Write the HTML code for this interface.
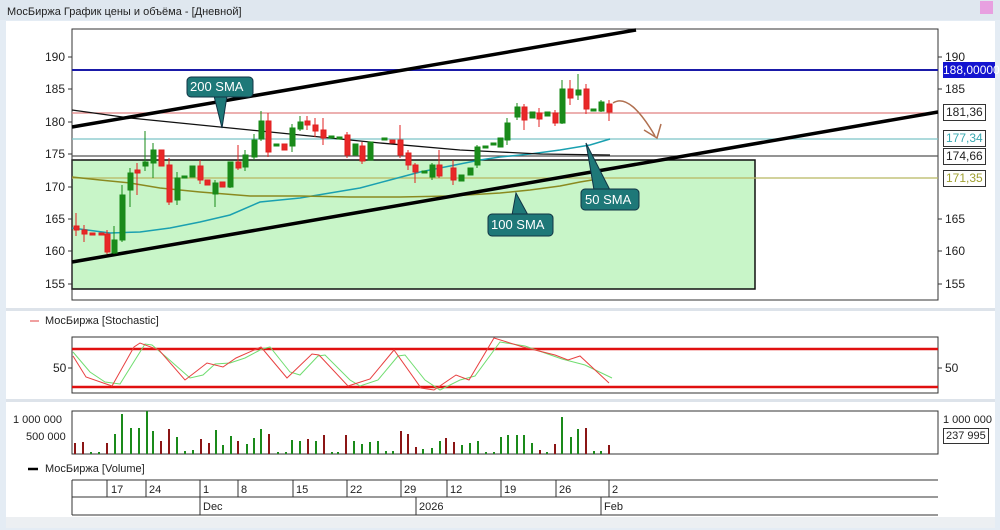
<!DOCTYPE html><html><head><meta charset="utf-8"><style>
body{margin:0;width:1000px;height:530px;overflow:hidden;background:#e4ecf4;font-family:"Liberation Sans",sans-serif;}
.t{position:absolute;font-size:12px;color:#222;white-space:nowrap;line-height:14px}
</style></head><body>
<div style="position:absolute;left:0;top:0;width:1000px;height:20px;background:#dfe7ef"></div>
<div class="t" style="left:7px;top:5px;font-size:11px">МосБиржа График цены и объёма - [Дневной]</div>
<div style="position:absolute;left:980px;top:1px;width:13px;height:13px;background:#e8a0e0"></div>
<div style="position:absolute;left:6px;top:21px;width:989px;height:496px;background:#fff"></div>
<div style="position:absolute;left:6px;top:517px;width:989px;height:11px;background:#eceff2"></div>
<svg style="position:absolute;left:0;top:0" width="1000" height="530">
<!-- main box -->
<rect x="72" y="160" width="683" height="129" fill="#c8f5c8" stroke="#111" stroke-width="1.5"/>
<rect x="72" y="29" width="866" height="271" fill="none" stroke="#333"/>
<g stroke-width="1.2">
<line x1="72" y1="70" x2="938" y2="70" stroke="#1a1aa8" stroke-width="2"/>
<line x1="72" y1="113" x2="938" y2="113" stroke="#e08080"/>
<line x1="72" y1="139" x2="938" y2="139" stroke="#7cc4c8"/>
<line x1="72" y1="156" x2="938" y2="156" stroke="#555"/>
<line x1="72" y1="178" x2="938" y2="178" stroke="#b8b860"/>
</g>
<polyline fill="none" stroke="#1aa0b0" stroke-width="1.5" points="72,228 110,233 140,232 170,228 200,222 230,215 260,202 280,200 300,198 330,193 360,188 390,180 420,172 450,166 480,160 500,157 530,154 560,150 590,145 610,139"/>
<polyline fill="none" stroke="#8a8a20" stroke-width="1.5" points="72,177 100,180 130,183 160,188 200,192 250,196 300,196 350,197 400,197 450,196 500,193 530,190 560,186 580,182 598,179"/>
<polyline fill="none" stroke="#111" stroke-width="1.3" points="72,110 130,118 220,127 300,135 380,143 460,150 500,152 540,154 610,155"/>
<line x1="72" y1="127" x2="636" y2="30" stroke="#000" stroke-width="3.5"/>
<line x1="72" y1="262" x2="938" y2="112" stroke="#000" stroke-width="3.5"/>
<g stroke-width="1">
<g stroke="#e02020" fill="#e82828">
<line x1="76" y1="213" x2="76" y2="236"/><rect x="74" y="226" width="5" height="4"/>
<line x1="84" y1="225" x2="84" y2="242"/><rect x="82" y="230" width="5" height="4"/>
<line x1="107" y1="230" x2="107" y2="254"/><rect x="105" y="234" width="5" height="18"/>
<line x1="137" y1="163" x2="137" y2="195"/><rect x="135" y="170" width="5" height="3"/>
<rect x="159" y="150" width="5" height="16"/>
<line x1="169" y1="158" x2="169" y2="205"/><rect x="167" y="165" width="5" height="37"/>
<line x1="200" y1="160" x2="200" y2="184"/><rect x="198" y="166" width="5" height="14"/>
<rect x="205" y="180" width="5" height="5"/><rect x="220" y="182" width="5" height="5"/>
<line x1="238" y1="145" x2="238" y2="170"/><rect x="236" y="162" width="5" height="6"/>
<line x1="268" y1="113" x2="268" y2="157"/><rect x="266" y="121" width="5" height="31"/>
<rect x="282" y="144" width="5" height="6"/>
<line x1="307" y1="116" x2="307" y2="130"/><rect x="305" y="121" width="5" height="4"/>
<line x1="315" y1="118" x2="315" y2="137"/><rect x="313" y="125" width="5" height="6"/>
<line x1="323" y1="118" x2="323" y2="145"/><rect x="321" y="130" width="5" height="8"/>
<line x1="347" y1="132" x2="347" y2="158"/><rect x="345" y="135" width="5" height="20"/>
<line x1="362" y1="142" x2="362" y2="164"/><rect x="360" y="146" width="5" height="15"/>
<rect x="390" y="140" width="5" height="3"/>
<line x1="400" y1="125" x2="400" y2="158"/><rect x="398" y="140" width="5" height="15"/>
<line x1="408" y1="150" x2="408" y2="170"/><rect x="406" y="153" width="5" height="12"/>
<line x1="415" y1="163" x2="415" y2="183"/><rect x="413" y="165" width="5" height="7"/>
<line x1="439" y1="150" x2="439" y2="178"/><rect x="437" y="165" width="5" height="11"/>
<line x1="453" y1="160" x2="453" y2="185"/><rect x="451" y="168" width="5" height="12"/>
<line x1="524" y1="104" x2="524" y2="130"/><rect x="522" y="107" width="5" height="13"/>
<line x1="539" y1="108" x2="539" y2="127"/><rect x="537" y="113" width="5" height="6"/>
<line x1="555" y1="110" x2="555" y2="126"/><rect x="553" y="113" width="5" height="10"/>
<line x1="570" y1="80" x2="570" y2="105"/><rect x="568" y="89" width="5" height="9"/>
<line x1="586" y1="84" x2="586" y2="114"/><rect x="584" y="89" width="5" height="20"/>
<line x1="609" y1="100" x2="609" y2="121"/><rect x="607" y="104" width="5" height="8"/>
<rect x="90" y="233" width="5" height="2"/><rect x="99" y="233" width="5" height="2"/>
</g>
<g stroke="#168a16" fill="#1a8a1a">
<line x1="114" y1="226" x2="114" y2="254"/><rect x="112" y="240" width="5" height="13"/>
<line x1="122" y1="185" x2="122" y2="242"/><rect x="120" y="195" width="5" height="45"/>
<line x1="130" y1="168" x2="130" y2="207"/><rect x="128" y="173" width="5" height="17"/>
<line x1="145" y1="131" x2="145" y2="171"/><rect x="143" y="162" width="5" height="4"/>
<line x1="153" y1="143" x2="153" y2="178"/><rect x="151" y="150" width="5" height="13"/>
<line x1="177" y1="172" x2="177" y2="205"/><rect x="175" y="178" width="5" height="22"/>
<rect x="182" y="176" width="5" height="2"/>
<rect x="190" y="166" width="5" height="11"/>
<line x1="215" y1="180" x2="215" y2="207"/><rect x="213" y="183" width="5" height="11"/>
<line x1="230" y1="162" x2="230" y2="188"/><rect x="228" y="162" width="5" height="25"/>
<line x1="245" y1="150" x2="245" y2="171"/><rect x="243" y="155" width="5" height="12"/>
<line x1="254" y1="134" x2="254" y2="160"/><rect x="252" y="140" width="5" height="17"/>
<line x1="261" y1="111" x2="261" y2="141"/><rect x="259" y="121" width="5" height="18"/>
<rect x="274" y="144" width="5" height="2"/>
<line x1="292" y1="124" x2="292" y2="152"/><rect x="290" y="128" width="5" height="18"/>
<line x1="300" y1="116" x2="300" y2="131"/><rect x="298" y="122" width="5" height="7"/>
<rect x="329" y="136" width="5" height="2"/><rect x="337" y="137" width="5" height="2"/>
<rect x="353" y="144" width="5" height="11"/>
<rect x="368" y="142" width="5" height="18"/>
<rect x="382" y="138" width="5" height="2"/><rect x="422" y="171" width="5" height="2"/>
<line x1="432" y1="163" x2="432" y2="180"/><rect x="430" y="165" width="5" height="12"/>
<rect x="459" y="175" width="5" height="6"/>
<rect x="468" y="168" width="5" height="7"/>
<line x1="477" y1="145" x2="477" y2="168"/><rect x="475" y="147" width="5" height="18"/>
<rect x="483" y="146" width="5" height="2"/><rect x="491" y="143" width="5" height="2"/>
<rect x="498" y="138" width="5" height="9"/>
<line x1="507" y1="118" x2="507" y2="145"/><rect x="505" y="123" width="5" height="17"/>
<line x1="517" y1="103" x2="517" y2="120"/><rect x="515" y="107" width="5" height="10"/>
<rect x="530" y="112" width="5" height="6"/><rect x="545" y="112" width="5" height="4"/>
<line x1="562" y1="80" x2="562" y2="124"/><rect x="560" y="89" width="5" height="34"/>
<line x1="578" y1="74" x2="578" y2="100"/><rect x="576" y="90" width="5" height="5"/>
<rect x="591" y="109" width="5" height="2"/>
<line x1="601" y1="100" x2="601" y2="112"/><rect x="599" y="102" width="5" height="9"/>
</g></g>
<path d="M613,103 C625,95 640,110 655,136" fill="none" stroke="#b07050" stroke-width="1.5"/>
<path d="M644,130 L657,138 L661,124" fill="none" stroke="#b07050" stroke-width="1.5"/>
<!-- callouts -->
<path d="M214,96 L222,128 L227,96Z" fill="#1e7878" stroke="#134"/>
<rect x="187" y="77" width="66" height="20" rx="4" fill="#1e7878" stroke="#134"/>
<path d="M586,143 L594,190 L610,190Z" fill="#1e7878" stroke="#134"/>
<rect x="581" y="189" width="58" height="21" rx="4" fill="#1e7878" stroke="#134"/>
<path d="M516,193 L512,215 L528,215Z" fill="#1e7878" stroke="#134"/>
<rect x="488" y="214" width="65" height="22" rx="4" fill="#1e7878" stroke="#134"/>
<!-- axis ticks -->
<g stroke="#333">
<line x1="68" y1="57" x2="72" y2="57"/><line x1="68" y1="89" x2="72" y2="89"/><line x1="68" y1="122" x2="72" y2="122"/><line x1="68" y1="154" x2="72" y2="154"/><line x1="68" y1="187" x2="72" y2="187"/><line x1="68" y1="219" x2="72" y2="219"/><line x1="68" y1="251" x2="72" y2="251"/><line x1="68" y1="284" x2="72" y2="284"/>
<line x1="938" y1="57" x2="942" y2="57"/><line x1="938" y1="89" x2="942" y2="89"/><line x1="938" y1="219" x2="942" y2="219"/><line x1="938" y1="251" x2="942" y2="251"/><line x1="938" y1="284" x2="942" y2="284"/>
</g>
<!-- separators -->
<rect x="6" y="308" width="989" height="3" fill="#dde3ea"/>
<rect x="6" y="399" width="989" height="3" fill="#dde3ea"/>
<!-- stochastic -->
<rect x="72" y="337" width="866" height="56" fill="none" stroke="#333"/>
<line x1="72" y1="349" x2="938" y2="349" stroke="#e01010" stroke-width="2.5"/>
<line x1="72" y1="387" x2="938" y2="387" stroke="#e01010" stroke-width="2.5"/>
<line x1="68" y1="368" x2="72" y2="368" stroke="#333"/><line x1="938" y1="368" x2="942" y2="368" stroke="#333"/>
<polyline fill="none" stroke="#70dd70" stroke-width="1" points="73,352 90,372 105,382 120,384 135,360 145,344 152,345 165,356 190,378 203,375 215,364 230,363 245,358 262,349 270,347 290,372 300,375 318,356 325,355 350,380 360,386 378,380 398,356 405,355 425,380 440,390 460,380 475,376 500,342 525,346 562,359 585,365 612,378"/>
<polyline fill="none" stroke="#e84040" stroke-width="1" points="73,356 86,377 112,386 134,347 140,343 159,350 185,380 198,370 207,363 223,367 236,358 261,347 287,378 312,354 319,355 348,386 370,379 394,350 421,388 434,390 456,375 469,380 494,338 523,347 555,355 568,360 580,356 609,383"/>
<!-- volume -->
<rect x="72" y="411" width="866" height="43" fill="none" stroke="#333"/>
<g stroke-width="2">
<g stroke="#8b1515"><line x1="75" y1="454" x2="75" y2="443"/><line x1="83" y1="454" x2="83" y2="442"/><line x1="107" y1="454" x2="107" y2="443"/><line x1="161" y1="454" x2="161" y2="441"/><line x1="169" y1="454" x2="169" y2="429"/><line x1="201" y1="454" x2="201" y2="439"/><line x1="209" y1="454" x2="209" y2="443"/><line x1="238" y1="454" x2="238" y2="441"/><line x1="269" y1="454" x2="269" y2="434"/><line x1="308" y1="454" x2="308" y2="439"/><line x1="324" y1="454" x2="324" y2="435"/><line x1="346" y1="454" x2="346" y2="435"/><line x1="401" y1="454" x2="401" y2="431"/><line x1="408" y1="454" x2="408" y2="434"/><line x1="416" y1="454" x2="416" y2="447"/><line x1="446" y1="454" x2="446" y2="438"/><line x1="454" y1="454" x2="454" y2="442"/><line x1="540" y1="454" x2="540" y2="450"/><line x1="555" y1="454" x2="555" y2="444"/><line x1="586" y1="454" x2="586" y2="428"/><line x1="609" y1="454" x2="609" y2="445"/></g>
<g stroke="#1a8a1a"><line x1="91" y1="454" x2="91" y2="452"/><line x1="99" y1="454" x2="99" y2="452"/><line x1="115" y1="454" x2="115" y2="434"/><line x1="122" y1="454" x2="122" y2="414"/><line x1="131" y1="454" x2="131" y2="428"/><line x1="139" y1="454" x2="139" y2="428"/><line x1="147" y1="454" x2="147" y2="411"/><line x1="153" y1="454" x2="153" y2="431"/><line x1="177" y1="454" x2="177" y2="437"/><line x1="185" y1="454" x2="185" y2="451"/><line x1="193" y1="454" x2="193" y2="450"/><line x1="216" y1="454" x2="216" y2="430"/><line x1="223" y1="454" x2="223" y2="445"/><line x1="231" y1="454" x2="231" y2="436"/><line x1="247" y1="454" x2="247" y2="444"/><line x1="254" y1="454" x2="254" y2="438"/><line x1="261" y1="454" x2="261" y2="429"/><line x1="278" y1="454" x2="278" y2="452"/><line x1="286" y1="454" x2="286" y2="452"/><line x1="292" y1="454" x2="292" y2="440"/><line x1="300" y1="454" x2="300" y2="441"/><line x1="316" y1="454" x2="316" y2="441"/><line x1="332" y1="454" x2="332" y2="452"/><line x1="338" y1="454" x2="338" y2="452"/><line x1="354" y1="454" x2="354" y2="441"/><line x1="362" y1="454" x2="362" y2="444"/><line x1="370" y1="454" x2="370" y2="442"/><line x1="378" y1="454" x2="378" y2="441"/><line x1="386" y1="454" x2="386" y2="451"/><line x1="393" y1="454" x2="393" y2="451"/><line x1="423" y1="454" x2="423" y2="449"/><line x1="432" y1="454" x2="432" y2="448"/><line x1="440" y1="454" x2="440" y2="441"/><line x1="462" y1="454" x2="462" y2="445"/><line x1="470" y1="454" x2="470" y2="443"/><line x1="478" y1="454" x2="478" y2="441"/><line x1="486" y1="454" x2="486" y2="452"/><line x1="494" y1="454" x2="494" y2="452"/><line x1="501" y1="454" x2="501" y2="437"/><line x1="508" y1="454" x2="508" y2="435"/><line x1="517" y1="454" x2="517" y2="435"/><line x1="524" y1="454" x2="524" y2="435"/><line x1="532" y1="454" x2="532" y2="443"/><line x1="547" y1="454" x2="547" y2="452"/><line x1="562" y1="454" x2="562" y2="417"/><line x1="571" y1="454" x2="571" y2="437"/><line x1="578" y1="454" x2="578" y2="429"/><line x1="594" y1="454" x2="594" y2="451"/><line x1="601" y1="454" x2="601" y2="451"/></g>
</g>
<line x1="28" y1="469" x2="38" y2="469" stroke="#000" stroke-width="2.5"/>
<line x1="30" y1="321" x2="39" y2="321" stroke="#e04040"/>
<!-- time axis -->
<g stroke="#333" fill="none">
<line x1="72" y1="480" x2="938" y2="480"/><line x1="72" y1="497" x2="938" y2="497"/><line x1="72" y1="515" x2="938" y2="515"/>
<line x1="72" y1="480" x2="72" y2="515"/>
<line x1="107" y1="480" x2="107" y2="497"/><line x1="146" y1="480" x2="146" y2="497"/><line x1="200" y1="480" x2="200" y2="515"/><line x1="238" y1="480" x2="238" y2="497"/><line x1="293" y1="480" x2="293" y2="497"/><line x1="347" y1="480" x2="347" y2="497"/><line x1="401" y1="480" x2="401" y2="497"/><line x1="447" y1="480" x2="447" y2="497"/><line x1="501" y1="480" x2="501" y2="497"/><line x1="556" y1="480" x2="556" y2="497"/><line x1="609" y1="480" x2="609" y2="497"/><line x1="416" y1="497" x2="416" y2="515"/><line x1="601" y1="497" x2="601" y2="515"/>
</g>
</svg>
<div class="t" style="left:45px;top:50px">190</div><div class="t" style="left:45px;top:82px">185</div><div class="t" style="left:45px;top:115px">180</div><div class="t" style="left:45px;top:147px">175</div><div class="t" style="left:45px;top:180px">170</div><div class="t" style="left:45px;top:212px">165</div><div class="t" style="left:45px;top:244px">160</div><div class="t" style="left:45px;top:277px">155</div>
<div class="t" style="left:945px;top:50px">190</div><div class="t" style="left:945px;top:82px">185</div><div class="t" style="left:945px;top:212px">165</div><div class="t" style="left:945px;top:244px">160</div><div class="t" style="left:945px;top:277px">155</div>
<div class="t" style="left:943px;top:62px;width:52px;height:16px;background:#1414d0;color:#fff;line-height:16px">188,00000</div>
<div class="t" style="left:943px;top:104px;height:15px;border:1px solid #333;background:#fff;padding:0 2px;line-height:15px">181,36</div>
<div class="t" style="left:943px;top:130px;height:15px;border:1px solid #333;background:#fff;padding:0 2px;line-height:15px;color:#3aa8b0">177,34</div>
<div class="t" style="left:943px;top:148px;height:15px;border:1px solid #333;background:#fff;padding:0 2px;line-height:15px">174,66</div>
<div class="t" style="left:943px;top:170px;height:15px;border:1px solid #333;background:#fff;padding:0 2px;line-height:15px;color:#a0a030">171,35</div>
<div class="t" style="left:190px;top:80px;color:#fff;font-size:13px">200 SMA</div>
<div class="t" style="left:585px;top:193px;color:#fff;font-size:13px">50 SMA</div>
<div class="t" style="left:491px;top:218px;color:#fff;font-size:13px">100 SMA</div>
<div class="t" style="left:45px;top:314px;font-size:11px">МосБиржа [Stochastic]</div>
<div class="t" style="left:53px;top:361px">50</div><div class="t" style="left:945px;top:361px">50</div>
<div class="t" style="left:13px;top:413px;font-size:11px">1 000 000</div><div class="t" style="left:26px;top:430px;font-size:11px">500 000</div>
<div class="t" style="left:943px;top:413px;font-size:11px">1 000 000</div>
<div class="t" style="left:943px;top:428px;font-size:11px;border:1px solid #333;background:#fff;padding:0 2px">237 995</div>
<div class="t" style="left:45px;top:462px;font-size:11px">МосБиржа [Volume]</div>
<div class="t" style="left:111px;top:483px;font-size:11px">17</div><div class="t" style="left:149px;top:483px;font-size:11px">24</div><div class="t" style="left:203px;top:483px;font-size:11px">1</div><div class="t" style="left:241px;top:483px;font-size:11px">8</div><div class="t" style="left:296px;top:483px;font-size:11px">15</div><div class="t" style="left:350px;top:483px;font-size:11px">22</div><div class="t" style="left:404px;top:483px;font-size:11px">29</div><div class="t" style="left:450px;top:483px;font-size:11px">12</div><div class="t" style="left:504px;top:483px;font-size:11px">19</div><div class="t" style="left:559px;top:483px;font-size:11px">26</div><div class="t" style="left:612px;top:483px;font-size:11px">2</div>
<div class="t" style="left:203px;top:500px;font-size:11px">Dec</div><div class="t" style="left:419px;top:500px;font-size:11px">2026</div><div class="t" style="left:604px;top:500px;font-size:11px">Feb</div>
</body></html>
